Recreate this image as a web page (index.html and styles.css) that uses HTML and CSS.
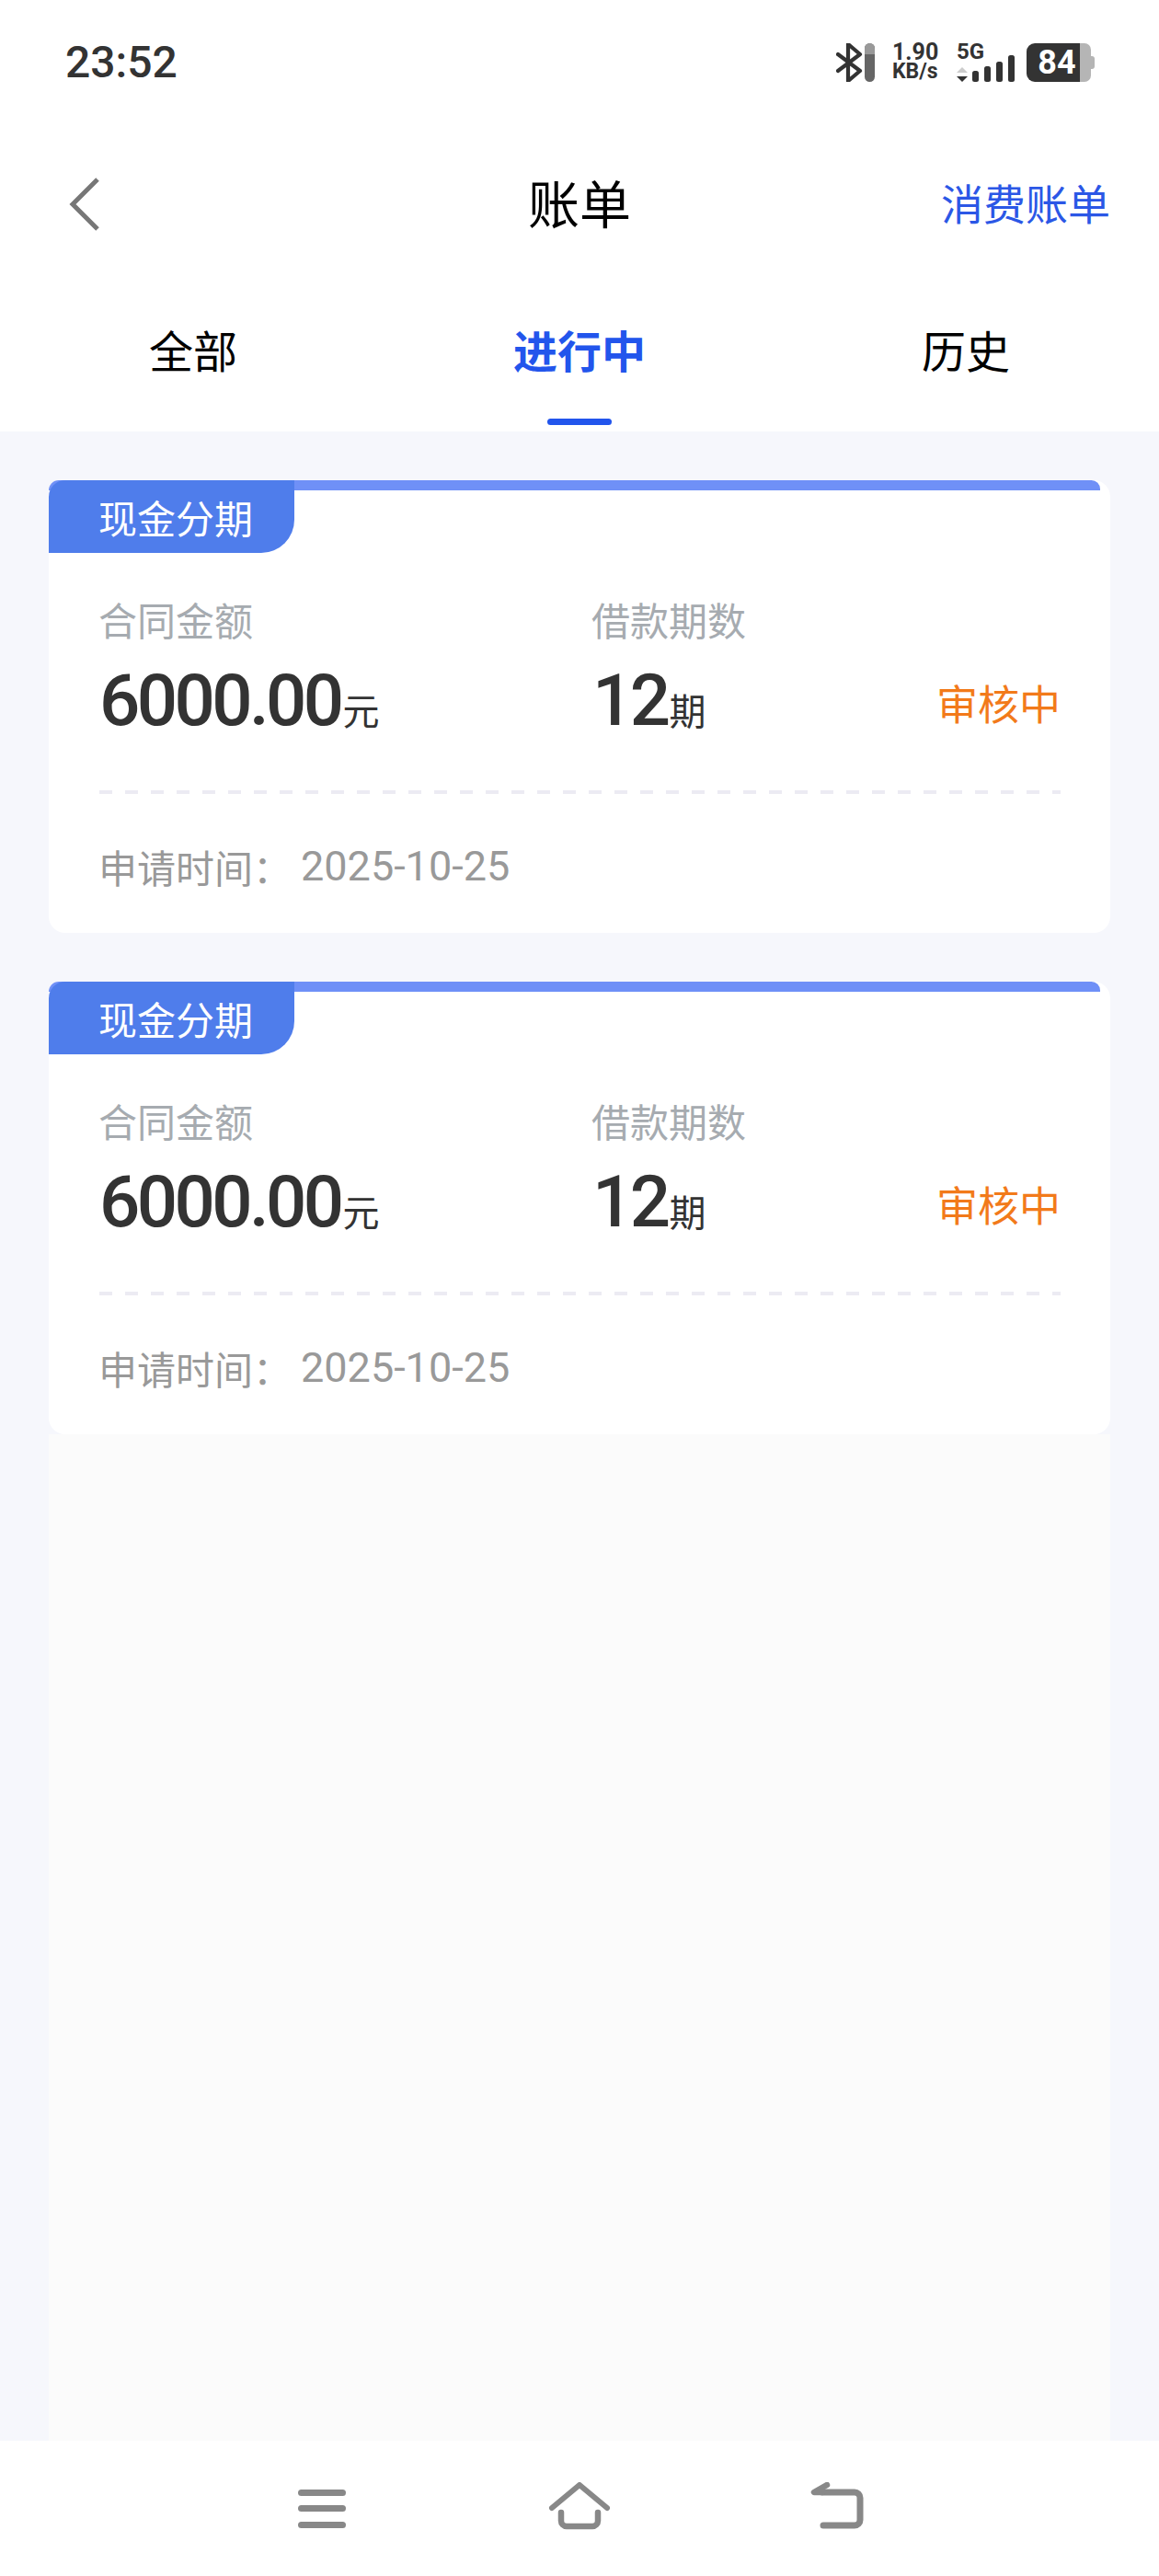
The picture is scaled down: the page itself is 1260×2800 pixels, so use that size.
FILE: index.html

```html
<!DOCTYPE html>
<html lang="zh-CN">
<head>
    <meta charset="UTF-8">
    <meta name="viewport" content="width=device-width, initial-scale=1.0">
    <title>账单</title>
    <link rel="stylesheet" href="styles.css">
</head>
<body>
    <div class="page">
        <div class="header">
            <div class="statusBar">
                <div class="time">23:52</div>
                <div class="statusIcons">
                    <svg class="bluetooth" width="42" height="42" viewBox="0 0 42 42">
                        <polyline points="2,12 26,30 13,41 13,1 26,12 2,30" fill="none" stroke="#333" stroke-width="4.2" stroke-linecap="round" stroke-linejoin="round"/>
                        <rect x="31" y="0" width="11" height="42" rx="5.5" fill="#666"/>
                        <path d="M31 12V5.5a5.5 5.5 0 0 1 11 0V12z" fill="#999"/>
                    </svg>
                    <div class="speed">
                        <div class="speedValue">1.90</div>
                        <div class="speedUnit">KB/s</div>
                    </div>
                    <div class="network">
                        <span class="networkType">5G</span>
                        <svg width="63" height="42" viewBox="0 0 63 42">
                            <polygon points="6,26 12,32 0,32" fill="#ccc"/>
                            <polygon points="0,36 12,36 6,42" fill="#333"/>
                            <rect x="17" y="30" width="7" height="12" rx="2.5" fill="#333"/>
                            <rect x="30" y="25" width="7" height="17" rx="2.5" fill="#333"/>
                            <rect x="43" y="20" width="7" height="22" rx="2.5" fill="#333"/>
                            <rect x="56" y="13" width="7" height="29" rx="2.5" fill="#333"/>
                        </svg>
                    </div>
                    <div class="battery">
                        <div class="batteryLevel">84</div>
                        <div class="batteryRest"></div>
                        <div class="batteryNub"></div>
                    </div>
                </div>
            </div>

            <div class="navBar">
                <div class="backBtn">
                    <svg width="34" height="60" viewBox="0 0 34 60">
                        <polyline points="31,3 4,30 31,57" fill="none" stroke="#777" stroke-width="5"/>
                    </svg>
                </div>
                <div class="pageTitle">账单</div>
                <div class="navLink">消费账单</div>
            </div>

            <div class="tabs">
                <div class="tab">全部</div>
                <div class="tab active">进行中</div>
                <div class="tab">历史</div>
            </div>
        </div>

        <div class="content">
            <div class="card">
                <div class="cardBar"></div>
                <div class="cardTag">现金分期</div>
                <div class="cardBody">
                    <div class="fields">
                        <div class="field">
                            <div class="fieldLabel">合同金额</div>
                            <div class="fieldValue">6000.00<span class="fieldUnit">元</span></div>
                        </div>
                        <div class="field">
                            <div class="fieldLabel">借款期数</div>
                            <div class="fieldValue">12<span class="fieldUnit">期</span></div>
                        </div>
                        <div class="status">审核中</div>
                    </div>
                    <div class="dashLine"></div>
                    <div class="applyRow">
                        <span>申请时间：</span>
                        <span class="applyDate">2025-10-25</span>
                    </div>
                </div>
            </div>

            <div class="card">
                <div class="cardBar"></div>
                <div class="cardTag">现金分期</div>
                <div class="cardBody">
                    <div class="fields">
                        <div class="field">
                            <div class="fieldLabel">合同金额</div>
                            <div class="fieldValue">6000.00<span class="fieldUnit">元</span></div>
                        </div>
                        <div class="field">
                            <div class="fieldLabel">借款期数</div>
                            <div class="fieldValue">12<span class="fieldUnit">期</span></div>
                        </div>
                        <div class="status">审核中</div>
                    </div>
                    <div class="dashLine"></div>
                    <div class="applyRow">
                        <span>申请时间：</span>
                        <span class="applyDate">2025-10-25</span>
                    </div>
                </div>
            </div>

            <div class="emptyArea"></div>
        </div>

        <div class="bottomNav">
            <div class="navKey">
                <svg width="52" height="52" viewBox="0 0 52 52">
                    <rect x="0" y="8" width="52" height="7" rx="3.5" fill="#888"/>
                    <rect x="0" y="25" width="52" height="7" rx="3.5" fill="#888"/>
                    <rect x="0" y="43" width="52" height="7" rx="3.5" fill="#888"/>
                </svg>
            </div>
            <div class="navKey">
                <svg width="68" height="52" viewBox="0 0 68 52">
                    <polyline points="4,28 34,3 64,28" fill="none" stroke="#888" stroke-width="6" stroke-linecap="round" stroke-linejoin="round"/>
                    <path d="M14 33V42a6 6 0 0 0 6 6H48a6 6 0 0 0 6-6V33" fill="none" stroke="#888" stroke-width="6.5" stroke-linecap="round"/>
                </svg>
            </div>
            <div class="navKey">
                <svg width="58" height="52" viewBox="0 0 58 52">
                    <path d="M13 11H48a6 6 0 0 1 6 6V41a6 6 0 0 1-6 6H14" fill="none" stroke="#888" stroke-width="7" stroke-linecap="round"/>
                    <path d="M18 3L4 11L13 11" fill="none" stroke="#888" stroke-width="6.5" stroke-linecap="round" stroke-linejoin="round"/>
                </svg>
            </div>
        </div>
    </div>
</body>
</html>
```

FILE: styles.css

```css
* {
    box-sizing: border-box;
}
body {
    margin: 0;
    font-family: "Noto Sans CJK SC", Roboto, sans-serif;
    background-color: white;
}
.page {
    width: 1260px;
    height: 2800px;
    display: flex;
    flex-direction: column;
}
.header {
    height: 469px;
    background-color: white;
}
.statusBar {
    height: 174px;
    padding: 0 70px 0 71px;
    display: flex;
    justify-content: space-between;
    align-items: flex-start;
    color: #333;
}
.time {
    margin-top: 40px;
    font-family: Roboto, sans-serif;
    font-size: 48px;
    font-weight: 500;
    line-height: 56px;
}
.statusIcons {
    margin-top: 47px;
    display: flex;
    align-items: flex-start;
    font-family: Roboto, sans-serif;
}
.speed {
    margin-left: 19px;
    font-weight: 700;
    width: 51px;
}
.speedValue {
    font-size: 25px;
    line-height: 20px;
}
.speedUnit {
    font-size: 23px;
    line-height: 22px;
}
.network {
    position: relative;
    margin-left: 19px;
    height: 42px;
}
.networkType {
    position: absolute;
    top: -1px;
    left: 0;
    font-size: 24px;
    font-weight: 700;
    line-height: 20px;
}
.battery {
    margin-left: 13px;
    height: 42px;
    display: flex;
    align-items: center;
}
.batteryLevel {
    width: 58px;
    height: 42px;
    padding-left: 8px;
    border-radius: 9px 0 0 9px;
    background-color: #333;
    color: white;
    font-size: 36px;
    font-weight: 700;
    line-height: 42px;
    text-align: center;
}
.batteryRest {
    width: 12px;
    height: 42px;
    border-radius: 0 7px 7px 0;
    background-color: #b5b5b5;
}
.batteryNub {
    width: 4px;
    height: 14px;
    border-radius: 0 3px 3px 0;
    background-color: #b5b5b5;
}
.navBar {
    height: 96px;
    padding: 0 53px;
    display: grid;
    grid-template-columns: 1fr auto 1fr;
    align-items: center;
}
.backBtn {
    margin-left: 22px;
    display: flex;
}
.pageTitle {
    padding-bottom: 7px;
    font-size: 56px;
    color: black;
}
.navLink {
    padding-bottom: 7px;
    font-size: 46px;
    color: #2b57e6;
    text-align: right;
}
.tabs {
    height: 65px;
    margin-top: 65px;
    display: grid;
    grid-template-columns: repeat(3, 1fr);
}
.tab {
    position: relative;
    height: 96px;
    font-size: 48px;
    line-height: 89px;
    text-align: center;
    color: black;
}
.tab.active {
    color: #2255ec;
    font-weight: 700;
}
.tab.active::after {
    content: "";
    position: absolute;
    left: 175px;
    top: 120px;
    width: 70px;
    height: 7px;
    border-radius: 4px;
    background-color: #2255ec;
}
.content {
    flex: 1;
    padding: 53px 53px 0;
    display: flex;
    flex-direction: column;
    gap: 53px;
    background-color: #f6f7fc;
}
.card {
    position: relative;
    height: 492px;
    border-radius: 18px;
    background-color: white;
}
.cardBar {
    position: absolute;
    top: 0;
    left: 0;
    right: 11px;
    height: 11px;
    border-radius: 14px 12px 0 0;
    background-color: #6f90f7;
}
.cardTag {
    position: relative;
    width: 267px;
    height: 79px;
    padding-left: 54px;
    border-radius: 18px 0 36px 0;
    background-color: #4f7deb;
    color: white;
    font-size: 42px;
    line-height: 79px;
}
.cardBody {
    padding: 47px 54px 0 55px;
}
.fields {
    display: flex;
}
.field {
    width: 536px;
    flex-shrink: 0;
}
.field + .field {
    width: 290px;
}
.fieldLabel {
    margin-left: -1px;
    font-size: 42px;
    line-height: 50px;
    color: #a6abb0;
}
.fieldValue {
    margin-top: 19px;
    font-family: Roboto, sans-serif;
    font-size: 78px;
    font-weight: 500;
    line-height: 90px;
    color: #333;
    letter-spacing: -3.6px;
}
.fieldUnit {
    margin-left: 2px;
    font-family: "Noto Sans CJK SC", sans-serif;
    font-size: 40px;
    font-weight: 400;
    line-height: 40px;
    letter-spacing: 0;
}
.status {
    margin-left: auto;
    align-self: flex-end;
    padding-bottom: 13px;
    font-size: 45px;
    line-height: 60px;
    color: #f27a1a;
}
.dashLine {
    margin-top: 52px;
    height: 4px;
    background-image: repeating-linear-gradient(to right, #ecebf3 0, #ecebf3 14px, transparent 14px, transparent 28px);
}
.applyRow {
    margin-top: 49px;
    display: flex;
    font-size: 42px;
    line-height: 60px;
    color: #999;
}
.applyRow span:first-child {
    margin-left: -1px;
}
.applyDate {
    margin-left: 10px;
    font-family: Roboto, sans-serif;
    font-size: 45px;
}
.emptyArea {
    flex: 1;
    margin-top: -53px;
    background-color: #fbfbfb;
}
.bottomNav {
    height: 147px;
    padding-top: 45px;
    display: flex;
    justify-content: center;
    background-color: white;
}
.navKey {
    width: 280px;
    display: flex;
    justify-content: center;
    align-items: flex-start;
}
```
